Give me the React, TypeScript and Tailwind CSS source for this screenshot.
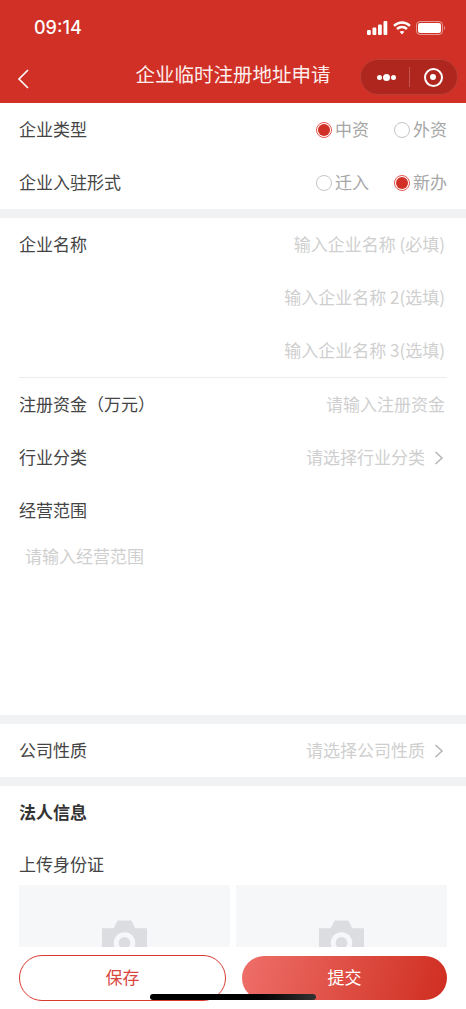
const fontStack = '"Noto Sans CJK SC", sans-serif';

function Radio({ label, checked }: { label: string; checked?: boolean }) {
    return (
        <div className="flex items-center gap-[3px]">
            {checked ? (
                <span className="flex h-[16px] w-[16px] items-center justify-center rounded-full border border-[#e8574d]">
                    <span className="h-[12px] w-[12px] rounded-full bg-[#d03025]"></span>
                </span>
            ) : (
                <span className="h-[16px] w-[16px] rounded-full border border-[#c4c4c4]"></span>
            )}
            <span className="pb-[2px] text-[17px] leading-[24px] text-[#a6a6a6]">{label}</span>
        </div>
    );
}

function Chevron() {
    return (
        <svg width="10" height="16" viewBox="0 0 10 16" fill="none" className="ml-[9px] mr-[3px]">
            <path d="M1.5 2 L8 8 L1.5 14" stroke="#b5b5b5" strokeWidth="1.5" />
        </svg>
    );
}

function Row({ label, children, bold }: { label?: string; children?: React.ReactNode; bold?: boolean }) {
    return (
        <div className="flex h-[53px] items-center justify-between">
            <span className={`pb-[2px] text-[17px] leading-[24px] ${bold ? 'font-bold text-[#333333]' : 'text-[#444444]'}`}>{label}</span>
            {children}
        </div>
    );
}

function Placeholder({ text }: { text: string }) {
    return <span className="pb-[1px] pr-[2px] text-[17px] leading-[24px] text-[#cfcfcf]">{text}</span>;
}

function Camera() {
    return (
        <svg width="45" height="40" viewBox="0 0 46 40" className="mx-auto mt-[35px] block">
            <path
                d="M0 8 H12 L16 0 H30 L34 8 H46 V40 H0 Z"
                fill="#dcdde0"
            />
            <circle cx="23" cy="23" r="11" fill="#f6f7f9" />
            <circle cx="23" cy="23" r="6" fill="#dcdde0" />
        </svg>
    );
}

export default function App() {
    return (
        <div className="relative flex h-[1009px] w-[466px] flex-col overflow-hidden bg-white" style={{ fontFamily: fontStack }}>
            {/* Header */}
            <div className="h-[103px] shrink-0 bg-[#d03025]">
                <div className="flex h-[56px] items-center justify-between pb-[1px] pl-[34px] pr-[20px]">
                    <span className="text-[18px] font-medium text-white" style={{ fontFamily: 'Inter, sans-serif' }}>09:14</span>
                    <div className="flex items-center gap-[5px]">
                        <svg width="21" height="14" viewBox="0 0 21 14" fill="white">
                            <rect x="0" y="9" width="3.8" height="5" rx="1" />
                            <rect x="5.5" y="6.5" width="3.8" height="7.5" rx="1" />
                            <rect x="11" y="3.5" width="3.8" height="10.5" rx="1" />
                            <rect x="16.5" y="0" width="3.8" height="14" rx="1" />
                        </svg>
                        <svg width="18" height="14" viewBox="0 0 18 14" fill="none" stroke="white" strokeWidth="2.4">
                            <path d="M1 4.8 C5.8 0.4 12.2 0.4 17 4.8" />
                            <path d="M4 8 C6.8 5.4 11.2 5.4 14 8" />
                            <path d="M9 13.5 L6.6 10.8 C8 9.6 10 9.6 11.4 10.8 Z" fill="white" stroke="none" />
                        </svg>
                        <svg width="30" height="14" viewBox="0 0 30 14" fill="none">
                            <rect x="0.5" y="0.5" width="26" height="13" rx="3.5" stroke="#ffffff" strokeOpacity="0.5" />
                            <rect x="2" y="2" width="23" height="10" rx="2.2" fill="white" />
                            <path d="M28 5 C29.2 5.4 29.2 8.6 28 9 Z" fill="#ffffff" fillOpacity="0.6" />
                        </svg>
                    </div>
                </div>
                <div className="relative flex h-[47px] items-start justify-center">
                    <svg width="14" height="22" viewBox="0 0 14 22" fill="none" className="absolute left-[16px] top-[12px]">
                        <path d="M12 2 L3 11 L12 20" stroke="white" strokeWidth="1.6" />
                    </svg>
                    <span className="mt-[4px] text-[19.5px] font-normal leading-[28px] text-[#fdeeed]">企业临时注册地址申请</span>
                    <div className="absolute left-[360px] top-[3px] flex h-[36px] w-[98px] items-center rounded-full border border-[#bd3e35] bg-[#ae261d]">
                        <div className="flex w-[48px] items-center justify-center gap-[1px] pl-[3px]">
                            <span className="h-[5px] w-[5px] rounded-full bg-white"></span>
                            <span className="h-[7px] w-[7px] rounded-full bg-white"></span>
                            <span className="h-[5px] w-[5px] rounded-full bg-white"></span>
                        </div>
                        <div className="h-[20px] w-px bg-[#c4544c]"></div>
                        <div className="flex flex-1 items-center justify-center">
                            <span className="mr-[1px] flex h-[19px] w-[19px] items-center justify-center rounded-full border-[2.5px] border-white">
                                <span className="h-[6px] w-[6px] rounded-full bg-white"></span>
                            </span>
                        </div>
                    </div>
                </div>
            </div>

            {/* Form */}
            <div className="min-h-0 flex-1 overflow-hidden">
                <div className="px-[19px]">
                    <Row label="企业类型">
                        <div className="grid grid-cols-[78px_auto]">
                            <Radio label="中资" checked />
                            <Radio label="外资" />
                        </div>
                    </Row>
                    <Row label="企业入驻形式">
                        <div className="grid grid-cols-[78px_auto]">
                            <Radio label="迁入" />
                            <Radio label="新办" checked />
                        </div>
                    </Row>
                </div>
                <div className="h-[9px] bg-[#f1f2f4]"></div>

                <div className="px-[19px]">
                    <div className="border-b border-[#ececec]">
                        <Row label="企业名称"><Placeholder text="输入企业名称 (必填)" /></Row>
                        <Row><Placeholder text="输入企业名称 2(选填)" /></Row>
                        <Row><Placeholder text="输入企业名称 3(选填)" /></Row>
                    </div>
                    <Row label="注册资金（万元）"><Placeholder text="请输入注册资金" /></Row>
                    <Row label="行业分类">
                        <div className="flex items-center">
                            <span className="pb-[1px] text-[17px] leading-[24px] text-[#cfcfcf]">请选择行业分类</span>
                            <Chevron />
                        </div>
                    </Row>
                    <Row label="经营范围" />
                    <div className="h-[178px] pl-[6px] pt-[7px]">
                        <span className="text-[17px] leading-[24px] text-[#cfcfcf]">请输入经营范围</span>
                    </div>
                </div>
                <div className="h-[9px] bg-[#f1f2f4]"></div>

                <div className="px-[19px]">
                    <Row label="公司性质">
                        <div className="flex items-center">
                            <span className="pb-[1px] text-[17px] leading-[24px] text-[#cfcfcf]">请选择公司性质</span>
                            <Chevron />
                        </div>
                    </Row>
                </div>
                <div className="h-[9px] bg-[#f1f2f4]"></div>

                <div className="px-[19px]">
                    <Row label="法人信息" bold />
                    <div className="flex h-[46px] items-center pt-[3px] text-[17px] leading-[24px] text-[#444444]">上传身份证</div>
                    <div className="grid grid-cols-2 gap-[6px]">
                        <div className="h-[140px] bg-[#f6f7f9]"><Camera /></div>
                        <div className="h-[140px] bg-[#f6f7f9]"><Camera /></div>
                    </div>
                </div>
            </div>

            {/* Bottom buttons */}
            <div className="flex h-[62px] shrink-0 items-start justify-between bg-white px-[19px] pt-[8px]">
                <button className="h-[46px] w-[207px] rounded-full border border-[#d93a30] pb-[3px] text-[17px] text-[#d9473d]">保存</button>
                <button className="mt-[1px] h-[44px] w-[205px] rounded-full bg-[linear-gradient(105deg,#ee6f69,#cf2e20)] pb-[3px] text-[17px] text-white">提交</button>
            </div>
            <div className="absolute bottom-[9px] left-[150px] h-[6px] w-[166px] rounded-full bg-gradient-to-r from-black from-50% to-[#333333]"></div>
        </div>
    );
}
